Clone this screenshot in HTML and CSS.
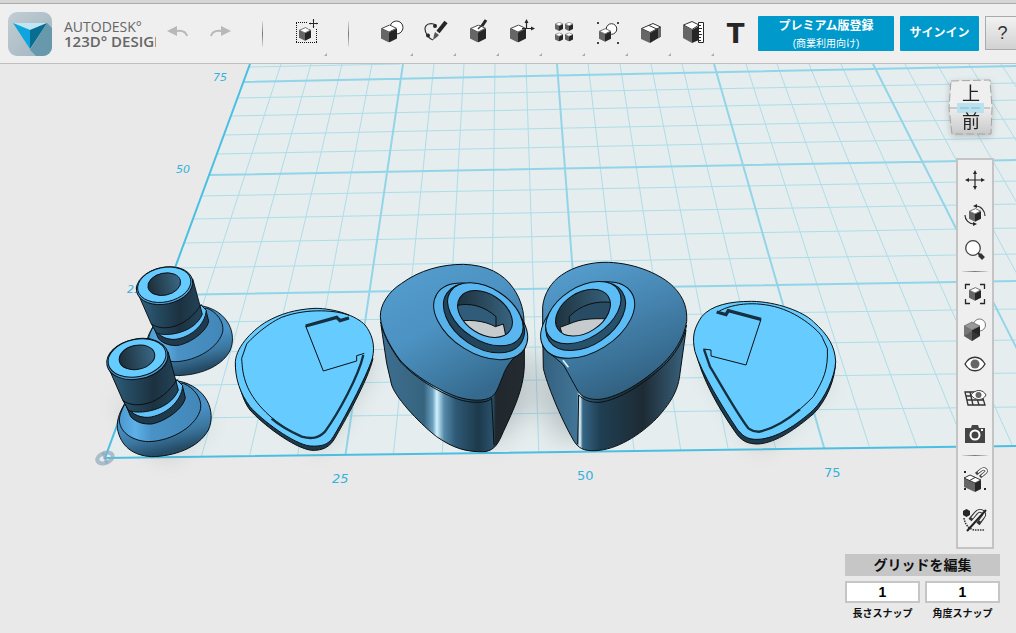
FILE: index.html
```html
<!DOCTYPE html>
<html lang="ja">
  <head>
    <meta charset="UTF-8" />
    <meta name="viewport" content="width=device-width, initial-scale=1.0" />
    <title>Autodesk 123D Design</title>
    <link rel="stylesheet" href="styles.css" />
  </head>
  <body>
    <!-- shared shapes -->
    <svg class="defs" width="0" height="0" aria-hidden="true">
      <symbol id="cube" viewBox="0 0 16 18">
        <path d="M0 4 8 8V18L0 14Z" fill="#666" />
        <path d="M8 8 16 4V14L8 18Z" fill="#262626" />
        <path d="M.6 4 8.6.5 15.4 3.8 8 7.6Z" fill="#fff" stroke="#333" stroke-width=".9" />
      </symbol>
      <symbol id="move" viewBox="0 0 24 24">
        <path d="M12 4V20M4 12H20" stroke="#262626" stroke-width="1.2" />
        <path d="M12 2 14 6h-4zM12 22 14 18h-4zM2 12 6 10v4zM22 12 18 10v4z" fill="#262626" />
      </symbol>
    </svg>

    <header class="toolbar">
      <a class="brand" href="#">
        <svg class="brand-logo" viewBox="0 0 44 44" aria-hidden="true">
          <defs>
            <linearGradient id="logoBg" x2="1" y2="1">
              <stop offset="0" stop-color="#c3cdd4" />
              <stop offset="1" stop-color="#9fb4bf" />
            </linearGradient>
            <clipPath id="logoClip"><rect width="44" height="44" rx="9" /></clipPath>
          </defs>
          <g clip-path="url(#logoClip)">
            <rect width="44" height="44" fill="url(#logoBg)" />
            <path d="M39 11 22 38 28 44H44V16Z" fill="#6898ab" />
            <path d="M5 11H39L22 18Z" fill="#bfe6f5" />
            <path d="M5 11 22 18V37Z" fill="#0ea5dc" />
            <path d="M39 11 22 18V37Z" fill="#076d91" />
          </g>
        </svg>
        <span class="brand-text">
          <span>AUTODESK°</span>
          <strong>123D° DESIGN</strong>
        </span>
      </a>
      <div class="history">
        <button type="button" aria-label="Undo">
          <svg width="22" height="14" viewBox="0 0 22 14"><path d="M0 6 10 1V11Z" fill="#b8b8b8" /><path d="M9 6C15 5 19 7 20 11" fill="none" stroke="#b8b8b8" stroke-width="2" /></svg>
        </button>
        <button type="button" aria-label="Redo">
          <svg width="22" height="14" viewBox="0 0 22 14"><path d="M22 6 12 1V11Z" fill="#b8b8b8" /><path d="M13 6C7 5 3 7 2 11" fill="none" stroke="#b8b8b8" stroke-width="2" /></svg>
        </button>
      </div>
      <span class="divider"></span>
      <div class="tools">
        <button type="button" class="has-menu" aria-label="Transform">
          <svg viewBox="0 0 33 33">
            <path d="M7 5.5H28M7 25.5H28M7.500 6V26M27.500 6V26" fill="none" stroke="#111" stroke-dasharray="1 1" />
            <use href="#cube" x="10" y="10" width="12" height="14" />
            <path d="M19 1h11v11H19z" fill="#efefef" />
            <use href="#move" x="19" y="1" width="11" height="11" />
            <path d="M24.500 2V11M20 6.500H29" stroke="#262626" />
          </svg>
        </button>
      </div>
      <span class="divider"></span>
      <nav class="tools" aria-label="Tools">
        <button type="button" class="has-menu" aria-label="Primitives">
          <svg viewBox="0 0 33 33">
            <circle cx="21.5" cy="10.5" r="6.5" fill="#fff" stroke="#333" />
            <use href="#cube" x="6" y="7.5" width="16" height="18" />
          </svg>
        </button>
        <button type="button" class="has-menu" aria-label="Sketch">
          <svg viewBox="0 0 33 33">
            <path d="M18 8C13 5 7 7 7 12C7 16 11 22 15 23" fill="none" stroke="#333" stroke-width="1.2" />
            <circle cx="17" cy="9" r="2" fill="#262626" /><circle cx="10" cy="18.5" r="2" fill="#262626" />
            <path d="M28 5 20 15" stroke="#262626" stroke-width="4" />
            <path d="M17 15 21 18 19 20 15 23 16 18Z" fill="#555" />
          </svg>
        </button>
        <button type="button" class="has-menu" aria-label="Construct">
          <svg viewBox="0 0 33 33">
            <use href="#cube" x="9" y="7.5" width="16" height="18" />
            <path d="M25 3 21 9" stroke="#262626" stroke-width="3" /><path d="M21 8 17 12" stroke="#333" stroke-width="1.5" />
          </svg>
        </button>
        <button type="button" class="has-menu" aria-label="Modify">
          <svg viewBox="0 0 33 33">
            <use href="#cube" x="6" y="7.5" width="16" height="18" />
            <path d="M22.5 12V5M18 11.5H28" stroke="#262626" stroke-width="1.2" />
            <path d="M22.5 2 24.5 6H20.5ZM31 11.5 27 9.5V13.5Z" fill="#262626" />
          </svg>
        </button>
        <button type="button" class="has-menu" aria-label="Pattern">
          <svg viewBox="0 0 33 33">
            <use href="#cube" x="8" y="5" width="8" height="9" /><use href="#cube" x="18" y="5" width="8" height="9" />
            <use href="#cube" x="8" y="15.5" width="8" height="9" /><use href="#cube" x="18" y="15.5" width="8" height="9" />
          </svg>
        </button>
        <button type="button" class="has-menu" aria-label="Grouping">
          <svg viewBox="0 0 33 33">
            <circle cx="21.5" cy="12" r="5.3" fill="#fff" stroke="#333" />
            <use href="#cube" x="9" y="11" width="12" height="14" />
            <path d="M7 5h2v2H7zM27 5h2v2H27zM7 25h2v2H7zM27 25h2v2H27z" fill="#444" />
          </svg>
        </button>
        <button type="button" class="has-menu" aria-label="Combine">
          <svg viewBox="0 0 33 33">
            <path d="M8 11.5 17 16V26L8 22Z" fill="#666" /><path d="M17 16 28 10V19.5L17 26Z" fill="#262626" />
            <path d="M25 12 28 10V19.5L25 21.5Z" fill="#666" />
            <path d="M8.5 11.5 20 6.5 27.5 10 17 15.5Z" fill="#fff" stroke="#333" />
            <path d="M16 8.500 24 12" stroke="#333" />
          </svg>
        </button>
        <button type="button" class="has-menu" aria-label="Measure">
          <svg viewBox="0 0 33 33">
            <path d="M7 8 16 13V26L7 21Z" fill="#666" /><path d="M16 13 23 9V23L16 26Z" fill="#262626" />
            <path d="M7.5 8 16 4.500 23 8 16 12.500Z" fill="#fff" stroke="#333" />
            <path d="M22.5 5.5H27.5V25.5H22.5Z" fill="#fff" stroke="#262626" />
            <path d="M23 8.500h2M23 11.500h3M23 14.500h2M23 17.500h3M23 20.500h2M23 23.500h2" stroke="#262626" />
          </svg>
        </button>
        <button type="button" class="text-tool" aria-label="Text">T</button>
      </nav>
      <div class="account">
        <button type="button" class="btn-blue premium">プレミアム版登録<small>(商業利用向け)</small></button>
        <button type="button" class="btn-blue signin">サインイン</button>
        <button type="button" class="help" aria-label="Help">?</button>
      </div>
    </header>

    <main class="workspace">
      <svg class="scene" viewBox="0 64 1016 569" preserveAspectRatio="xMinYMin slice" role="img" aria-label="3D view">
        <defs>
          <clipPath id="planeClip"><path d="M105 458 250 64H1016V446Z" /></clipPath>
          <filter id="soft" x="-30%" y="-30%" width="160%" height="160%"><feGaussianBlur stdDeviation="12" /></filter>
          <linearGradient id="tube">
            <stop offset="0" stop-color="#34637f" /><stop offset=".3" stop-color="#254b62" />
            <stop offset=".65" stop-color="#1c3140" /><stop offset="1" stop-color="#24445a" />
          </linearGradient>
          <linearGradient id="bore">
            <stop offset="0" stop-color="#1c2d38" /><stop offset="1" stop-color="#3a6885" />
          </linearGradient>
          <linearGradient id="flange" x2=".3" y2="1">
            <stop offset="0" stop-color="#3f7fae" /><stop offset=".55" stop-color="#4a93c8" />
            <stop offset=".8" stop-color="#3b77a0" /><stop offset="1" stop-color="#254c67" />
          </linearGradient>
          <linearGradient id="cone">
            <stop offset="0" stop-color="#4d98cf" /><stop offset=".2" stop-color="#5cb0e8" />
            <stop offset=".4" stop-color="#4a92c6" /><stop offset="1" stop-color="#4287b8" />
          </linearGradient>
          <linearGradient id="topL" x2=".6" y2="1">
            <stop offset="0" stop-color="#559fd0" /><stop offset=".5" stop-color="#4c92c2" />
            <stop offset=".8" stop-color="#3f7ba3" /><stop offset="1" stop-color="#356a8e" />
          </linearGradient>
          <linearGradient id="topR" x1=".3" x2=".7" y2="1">
            <stop offset="0" stop-color="#549dce" /><stop offset=".4" stop-color="#4684b0" />
            <stop offset=".75" stop-color="#386d91" /><stop offset="1" stop-color="#2f5a77" />
          </linearGradient>
          <linearGradient id="sideL">
            <stop offset="0" stop-color="#3e6f90" /><stop offset=".3" stop-color="#36647f" />
            <stop offset=".36" stop-color="#6aa0bf" /><stop offset=".39" stop-color="#d3f2ff" />
            <stop offset=".44" stop-color="#558aa8" /><stop offset=".52" stop-color="#2e5a76" />
            <stop offset=".68" stop-color="#1d394b" /><stop offset=".78" stop-color="#2a526c" />
            <stop offset=".8" stop-color="#20282e" /><stop offset="1" stop-color="#242c31" />
          </linearGradient>
          <linearGradient id="sideR">
            <stop offset="0" stop-color="#35607f" /><stop offset=".24" stop-color="#417596" />
            <stop offset=".26" stop-color="#e5f7ff" /><stop offset=".28" stop-color="#356585" />
            <stop offset=".4" stop-color="#203f53" /><stop offset=".7" stop-color="#1d2b34" />
            <stop offset="1" stop-color="#3a6480" />
          </linearGradient>
          <clipPath id="holeL"><ellipse cx="345" cy="192" rx="90" ry="60" transform="rotate(33 345 192)" /></clipPath>
          <clipPath id="holeR"><ellipse cx="159" cy="188" rx="90" ry="60" transform="rotate(-33 159 188)" /></clipPath>

          <g id="peg">
            <path d="M108 440C92 465 80 490 82 520C92 575 130 602 185 605C250 604 325 580 355 525C380 470 350 395 265 378Z" fill="url(#flange)" />
            <path d="M108 440C95 465 88 480 88 498C92 535 130 558 175 560C250 558 322 510 332 460C336 430 312 398 280 385Z" fill="url(#cone)" />
            <path d="M104 442 122 485C140 503 160 508 185 507C230 498 280 460 286 428L277 392 262 376Z" fill="#1f3a4c" />
            <path d="M104 442C118 475 145 488 175 487C225 482 275 440 278 392L262 376Z" fill="#62c3fa" />
            <path d="M52 330 98 435 116 466C145 480 240 468 265 405L234 290Z" fill="url(#tube)" />
            <path d="M98 436C135 464 215 450 262 372" fill="none" />
            <ellipse cx="142" cy="312" rx="93" ry="60" transform="rotate(-12 142 312)" fill="#4a9fd6" />
            <ellipse cx="141" cy="309" rx="88" ry="56" transform="rotate(-12 141 309)" fill="#66ccff" />
            <ellipse cx="141" cy="307" rx="54" ry="36" transform="rotate(-12 141 307)" fill="url(#bore)" />
          </g>
        </defs>

        <!-- work plane -->
        <path d="M105 458 250 64H1016V446Z" fill="#e5edee" />
        <g clip-path="url(#planeClip)" fill="none">
          <path class="grid-minor" d="M281 64 153 458M311 64 201 458M342 64 249 458M372 64 297 458M434 64 393 458M464 64 442 458M495 64 490 458M526 64 539 458M588 64 635 458M620 64 682 458M651 64 730 458M682 64 778 458M746 64 873 458M777 64 921 458M809 64 970 458M841 64 1018 458M905 64 1115 458M937 64 1164 458M969 64 1212 458M1001 64 1261 458" />
          <path class="grid-minor" d="M119 419 1016 407M131 386 1016 373M144 353 1016 340M155 323 1016 309M175 268 1016 254M184 243 1016 228M193 219 1016 204M201 196 1016 181M217 154 1016 138M224 135 1016 119M231 116 1016 100M237 98 1016 83M249 67 400 64" />
          <path class="grid-major" d="M403 64 345 458M557 64 587 458M714 64 827 458M873 64 1072 458M165 295 1016 281M209 175 1016 160M243 82 1016 66" />
        </g>
        <path class="grid-edge" d="M250 64 105 458 1016 446" />

        <g class="axis">
          <text x="213" y="81" class="axis-far">75</text>
          <text x="176" y="173" class="axis-far">50</text>
          <text x="127" y="293" class="axis-far">25</text>
          <text x="332" y="483" class="axis-lean">25</text>
          <text x="577" y="480">50</text>
          <text x="824" y="477">75</text>
        </g>

        <!-- origin -->
        <g transform="rotate(-20 105 458)">
          <ellipse cx="105" cy="458" rx="8" ry="5" fill="none" stroke="#8fa9bd" stroke-width="4" opacity=".7" />
          <path d="M105 452V464" stroke="#8fa9bd" stroke-width="3" opacity=".7" />
        </g>

        <!-- contact shadows -->
        <g filter="url(#soft)" fill="#58636a" opacity=".3">
          <path d="M440 400 530 350 530 410 490 445ZM545 350 600 430 560 440 538 400Z" />
          <path d="M270 400 320 450 375 360 345 350ZM705 360 760 450 830 380 760 360ZM115 400 165 460 210 420Z" />
        </g>

        <svg class="part" x="90" y="255" width="160" height="220" viewBox="0 0 480 660">
          <use href="#peg" transform="translate(93 -195) scale(.92)" />
          <use href="#peg" />
        </svg>

        <svg class="part" x="225" y="290" width="170" height="200" viewBox="0 0 510 600">
          <path d="M31 225C45 310 60 340 75 360C110 400 205 474 260 481C295 482 315 470 330 444C355 400 430 270 444 205Z" fill="#1f3a4c" />
          <path d="M270 55C330 55 395 78 420 105C440 130 452 165 442 205C425 260 350 400 325 440C310 465 290 470 255 468C205 462 110 390 75 350C45 310 30 265 31 215C35 165 90 115 125 95C165 72 210 58 270 55Z" fill="#66ccff" />
          <path d="M372 76C340 62 250 52 170 82C120 105 75 150 65 162L50 205C52 230 52 255 68 292C90 340 140 395 220 435" fill="none" />
          <path class="groove" d="M140 386C165 408 195 424 230 440C260 448 280 445 300 425C340 370 400 260 415 195" />
          <path class="groove notch" d="M242 108 335 82 345 92 372 84" />
          <path d="M242 108 295 243 395 213V197L418 190" fill="none" />
        </svg>

        <svg class="part" x="370" y="250" width="170" height="220" viewBox="0 0 510 660">
          <path d="M33 225 50 340 65 405C80 450 160 530 200 560C250 595 290 607 345 605C375 600 385 580 400 545C430 480 460 420 463 350V220Z" fill="url(#sideL)" />
          <path d="M365 445 372 585" fill="none" />
          <path d="M31 215C40 255 65 300 92 336C130 378 200 425 262 447C300 460 350 462 366 444" fill="none" />
          <path d="M280 43C350 45 400 70 430 115C455 150 462 190 462 215L465 295C430 320 410 345 398 380C385 410 380 430 365 440C345 455 300 453 260 440C190 415 120 365 90 330C60 290 33 240 31 200C30 165 55 125 95 100C150 60 215 43 280 43Z" fill="url(#topL)" />
          <ellipse cx="332" cy="214" rx="155" ry="95" transform="rotate(32 332 214)" fill="#58b2ea" />
          <ellipse cx="342" cy="204" rx="134" ry="88" transform="rotate(34 342 204)" fill="#22455b" />
          <ellipse cx="346" cy="193" rx="125" ry="78" transform="rotate(33 346 193)" fill="#5ab6f0" />
          <g clip-path="url(#holeL)">
            <path d="M250 110H440V270H250Z" fill="url(#bore)" />
            <path d="M255 168C300 155 345 170 378 200V232L255 220Z" fill="#315c79" />
            <path d="M250 218C290 205 345 212 376 230L400 222 410 270H250Z" fill="#c6cccd" />
          </g>
          <ellipse cx="345" cy="192" rx="90" ry="60" transform="rotate(33 345 192)" fill="none" />
        </svg>

        <svg class="part" x="530" y="250" width="170" height="240" viewBox="0 0 510 720">
          <path d="M38 240 40 355C50 400 90 500 130 570C145 595 160 603 195 602C260 600 330 555 380 505C430 450 445 415 450 370L468 240Z" fill="url(#sideR)" />
          <path d="M146 435 143 582" fill="none" />
          <path d="M470 225C460 280 430 318 400 348C340 403 270 448 210 457C175 458 160 448 146 435" fill="none" />
          <path d="M235 37C320 40 395 75 430 110C465 145 472 180 470 215C460 270 430 310 400 340C340 395 270 440 210 448C175 450 155 440 145 425C125 390 110 360 100 345C80 325 50 305 38 290V170C42 130 65 95 95 75C130 50 185 35 235 37Z" fill="url(#topR)" />
          <path class="glint" d="M100 332 114 350" />
          <ellipse cx="173" cy="210" rx="155" ry="95" transform="rotate(-32 173 210)" fill="#5cbcf6" />
          <ellipse cx="167" cy="199" rx="132" ry="86" transform="rotate(-34 167 199)" fill="#28516b" />
          <ellipse cx="160" cy="188" rx="125" ry="76" transform="rotate(-33 160 188)" fill="#5cbcf6" />
          <g clip-path="url(#holeR)">
            <path d="M60 100H260V270H60Z" fill="url(#bore)" />
            <path d="M118 225V200C150 165 200 150 250 158V215Z" fill="#284c64" />
            <path d="M90 232 130 217C160 205 200 205 250 207V270H103Z" fill="#c6cccd" />
          </g>
          <ellipse cx="159" cy="188" rx="90" ry="60" transform="rotate(-33 159 188)" fill="none" />
        </svg>

        <svg class="part" x="680" y="280" width="190" height="210" viewBox="0 0 570 630">
          <path d="M43 200C65 300 120 390 165 455C185 485 205 492 235 492C290 488 350 445 402 400C440 360 465 300 467 245Z" fill="#1f3a4c" />
          <path d="M215 64C290 65 370 95 400 125C445 165 465 200 467 245C465 290 435 355 400 390C350 435 290 475 235 478C200 480 185 465 170 445C130 385 65 280 45 215C35 170 42 145 65 110C95 75 150 64 215 64Z" fill="#66ccff" />
          <path d="M115 95C160 68 240 62 310 88C370 110 425 160 428 175L442 205C445 270 430 300 400 350C350 400 300 440 235 455" fill="none" />
          <path class="groove" d="M360 388C310 430 270 448 240 455C225 456 215 452 205 445C170 400 100 275 90 260L72 208" />
          <path class="groove notch" d="M110 96 138 104 145 92 243 118" />
          <path d="M243 118 198 255 93 228V210L70 207" fill="none" />
        </svg>
      </svg>

      <aside class="view-tools">
        <button type="button" class="viewcube" aria-label="View cube">
          <svg viewBox="0 0 46 60" width="46" height="60">
            <defs>
              <linearGradient id="cubeFront" x2="0" y2="1"><stop offset="0" stop-color="#eee" /><stop offset="1" stop-color="#c9c9c9" /></linearGradient>
            </defs>
            <path d="M3 3 42 2 44 30H1Z" fill="#efefef" />
            <path d="M1 30H44L43 56H4Z" fill="url(#cubeFront)" />
            <path d="M3 3 42 2 44 30 43 56H4L1 30ZM1 30H44" fill="none" stroke="#a5a5a5" stroke-dasharray="8 3" />
            <path d="M9 25H36V35H9Z" fill="#b9e2f1" />
            <path d="M12 30H33" stroke="#8ab5c4" stroke-dasharray="9 2" />
            <text x="23" y="22">上</text>
            <text x="23" y="50">前</text>
          </svg>
        </button>

        <nav class="nav-bar" aria-label="View">
          <button type="button" aria-label="Pan"><svg viewBox="0 0 24 24"><use href="#move" width="24" height="24" /></svg></button>
          <button type="button" aria-label="Orbit">
            <svg viewBox="0 0 24 24">
              <use href="#cube" x="6" y="5" width="12" height="14" />
              <path d="M13 3C18 3 22 8 22 13M11 21C6 21 2 17 2 12" fill="none" stroke="#333" stroke-width="1.2" />
              <path d="M14 1V5L10 3ZM10 19V23L14 21Z" fill="#262626" />
            </svg>
          </button>
          <button type="button" aria-label="Zoom">
            <svg viewBox="0 0 24 24"><circle cx="10" cy="10" r="7.3" fill="#fff" stroke="#444" stroke-width="1.3" /><path d="M15 15 18 18" stroke="#333" stroke-width="2" /><path d="M16.5 16.5 20.5 20.5" stroke="#333" stroke-width="4" /></svg>
          </button>
          <hr />
          <button type="button" aria-label="Fit">
            <svg viewBox="0 0 24 24"><use href="#cube" x="6" y="5" width="12" height="14" /><path d="M7 2.5H2.5V7M17 2.5H21.5V7M7 21.5H2.5V17M17 21.5H21.5V17" fill="none" stroke="#262626" stroke-width="1.3" /></svg>
          </button>
          <button type="button" aria-label="Materials">
            <svg viewBox="0 0 24 24">
              <circle cx="16.5" cy="8" r="6" fill="#fff" stroke="#777" />
              <path d="M1 9 9 13V24L1 19Z" fill="#777" /><path d="M9 13 17 9V19L9 24Z" fill="#262626" />
              <path d="M1 9 9 5 17 9 9 13Z" fill="#999" stroke="#555" stroke-width=".6" /><path d="M1 19 9 14 17 19 9 24Z" fill="#444" opacity=".5" />
            </svg>
          </button>
          <button type="button" aria-label="Visibility">
            <svg viewBox="0 0 24 24"><path d="M2 12C7 3 17 3 22 12C17 21 7 21 2 12Z" fill="#fff" stroke="#333" stroke-width="1.3" /><circle cx="12" cy="12" r="4.5" fill="#666" /></svg>
          </button>
          <button type="button" aria-label="Grid visibility">
            <svg viewBox="0 0 24 24">
              <path d="M2 5H18L22 18H5ZM3 9H20M4 13H21M7 5 10 18M12 5 16 18" fill="none" stroke="#333" stroke-width="1.3" />
              <path d="M8 8C12 2 20 2 23 8C20 14 12 14 8 8Z" fill="#fff" stroke="#444" /><circle cx="15.5" cy="8" r="3" fill="#666" />
            </svg>
          </button>
          <button type="button" aria-label="Screenshot">
            <svg viewBox="0 0 24 24"><path d="M2 6H8L9 3H15L16 6H22V21H2Z" fill="#444" /><circle cx="12" cy="13" r="4.5" fill="none" stroke="#fff" stroke-width="2" /><path d="M18 7h2v2h-2z" fill="#fff" /></svg>
          </button>
          <hr />
          <button type="button" class="tall" aria-label="Snap">
            <svg viewBox="0 0 24 24">
              <path d="M1 10 12 15V24L1 19Z" fill="#666" /><path d="M12 15 18 12V21L12 24Z" fill="#262626" />
              <path d="M1 10 7 7 18 12 12 15Z" fill="#fff" stroke="#333" /><path d="M6.500 12.500 12 9.500" stroke="#333" />
              <path d="M13 6 18 2C22-1 25 3 22 5L17 9" fill="none" stroke="#444" stroke-width="3.2" /><path d="M15 4.500 18 2C22-1 25 3 22 5L18.500 8" fill="none" stroke="#fff" stroke-width="1.6" />
              <path d="M1 3h2v2H1zM1 20h2v2H1zM21 20h2v2H21z" fill="#262626" />
            </svg>
          </button>
          <button type="button" class="tall" aria-label="Snapping off">
            <svg viewBox="0 0 24 24">
              <path d="M0 3 3.5 1 7 3V7L3.5 9 0 7Z" fill="#262626" />
              <path d="M1 10C2 18 8 22 12 22H22" fill="none" stroke="#333" stroke-width="1.5" stroke-dasharray="1.5 1" />
              <path d="M7 12 13 5C17 0 24 5 20 9L15 16" fill="none" stroke="#333" stroke-width="4" /><path d="M9 10 13 5C17 0 24 5 20 9L17 13" fill="none" stroke="#efefef" stroke-width="2" />
              <path d="M4 23 23 2" stroke="#222" stroke-width="2" />
            </svg>
          </button>
        </nav>
      </aside>

      <form class="grid-panel">
        <button type="button" class="grid-title">グリッドを編集</button>
        <div class="snap">
          <input id="lengthSnap" type="text" value="1" />
          <label for="lengthSnap">長さスナップ</label>
        </div>
        <div class="snap">
          <input id="angleSnap" type="text" value="1" />
          <label for="angleSnap">角度スナップ</label>
        </div>
      </form>
    </main>
  </body>
</html>
```

FILE: styles.css
```css
* {
  box-sizing: border-box;
}
body {
  margin: 0;
  height: 100vh;
  display: flex;
  flex-direction: column;
  overflow: hidden;
  background: #e9e9e9;
  color: #111;
  font-family: "Liberation Sans", "Noto Sans CJK JP", sans-serif;
}
button {
  padding: 0;
  border: none;
  background: none;
  font-family: inherit;
  color: inherit;
  cursor: pointer;
}
.defs {
  position: absolute;
}

/* top toolbar */
.toolbar {
  flex: none;
  display: flex;
  align-items: center;
  height: 64px;
  padding: 4px 0 0 8px;
  background: #efefef;
  border-bottom: 1px solid #bfbfbf;
  box-shadow: inset 0 3px #d6d6d6, inset 0 4px #aaa;
}
.brand {
  flex: none;
  display: flex;
  gap: 12px;
  width: 148px;
  overflow: hidden;
  color: #666;
  text-decoration: none;
}
.brand-logo {
  flex: none;
  width: 44px;
  height: 44px;
}
.brand-text {
  display: flex;
  flex-direction: column;
  padding-top: 7px;
  font-family: "Open Sans", sans-serif;
  font-size: 14px;
  line-height: 15px;
  white-space: nowrap;
}
.brand-text strong {
  font-size: 15px;
  font-weight: 600;
}
.history {
  flex: none;
  display: flex;
  gap: 20px;
  margin: 0 31px 0 11px;
}
.history button {
  height: 24px;
}
.divider {
  flex: none;
  width: 1px;
  height: 26px;
  background: linear-gradient(#ddd, #777, #ddd);
}
.tools {
  flex: none;
  display: flex;
  margin: 0 21px;
}
.tools button {
  position: relative;
  width: 43px;
  height: 44px;
}
.tools svg {
  display: block;
  width: 33px;
  height: 33px;
  margin: 0 5px;
}
.has-menu::after {
  content: "";
  position: absolute;
  right: 0;
  bottom: 0;
  border-left: 3px solid transparent;
  border-bottom: 3px solid #aaa;
}
.tools .text-tool {
  font: bold 26px "DejaVu Sans", sans-serif;
  color: #262626;
}
.divider + nav.tools {
  margin-right: 0;
}
.account {
  flex: none;
  display: flex;
  gap: 6px;
  margin-left: 1px;
}
.btn-blue {
  height: 35px;
  border-radius: 1px;
  background: #0099cc;
  color: #fff;
  font-size: 12px;
  font-weight: bold;
  line-height: 17px;
}
.btn-blue small {
  display: block;
  font-size: 10px;
  font-weight: normal;
}
.premium {
  width: 136px;
  padding-top: 2px;
}
.signin {
  width: 79px;
}
.help {
  width: 35px;
  height: 34px;
  border: 1px solid #aaa;
  background: linear-gradient(#f2f2f2, #d2d2d2);
  color: #333;
  font-size: 18px;
}

/* modelling area */
.workspace {
  flex: 1;
  position: relative;
  min-height: 0;
}
.scene {
  display: block;
  width: 100%;
  height: 100%;
}
.grid-minor {
  stroke: #addde9;
}
.grid-major {
  stroke: #93d5e8;
  stroke-width: 2;
}
.grid-edge {
  fill: none;
  stroke: #4bbfe2;
  stroke-width: 2;
}
.axis {
  fill: #35b2dc;
  font: 13px "DejaVu Sans", sans-serif;
}
.axis-far {
  font-size: 11px;
  font-style: oblique;
}
.axis-lean {
  font-style: oblique;
}
.part {
  stroke: #0a0f12;
  stroke-width: 3;
}
.part .groove {
  fill: none;
  stroke: #16303f;
  stroke-width: 7;
}
.part .notch {
  stroke-width: 10;
}
.part .glint {
  stroke: #d9f1fc;
  stroke-width: 5;
  stroke-linecap: round;
}

/* view cube and navigation */
.view-tools {
  position: absolute;
  top: 14px;
  right: 22px;
  display: flex;
  flex-direction: column;
  align-items: flex-end;
  gap: 20px;
}
.viewcube {
  height: 60px;
}
.viewcube svg {
  display: block;
  filter: drop-shadow(0 2px 3px rgba(0, 0, 0, 0.2));
}
.viewcube text {
  font: 18px "Noto Sans CJK JP", sans-serif;
  fill: #222;
  text-anchor: middle;
}
.nav-bar {
  display: flex;
  flex-direction: column;
  align-items: center;
  width: 38px;
  padding: 2px 0 7px;
  border: 2px solid #c4c4c4;
  background: #efefef;
}
.nav-bar button {
  height: 35px;
}
.nav-bar .tall {
  height: 40px;
}
.nav-bar svg {
  display: block;
  width: 24px;
  height: 24px;
  overflow: visible;
}
.nav-bar hr {
  width: 26px;
  height: 1px;
  margin: 4px 0;
  border: none;
  background: linear-gradient(90deg, #ddd, #777, #ddd);
}

/* grid settings */
.grid-panel {
  position: absolute;
  right: 16px;
  bottom: 11px;
  display: grid;
  grid-template-columns: 75px 75px;
  gap: 5px;
  font-weight: bold;
}
.grid-title {
  grid-column: 1 / -1;
  height: 22px;
  background: #c6c6c6;
  font-size: 14px;
  font-weight: bold;
  line-height: 22px;
}
.snap {
  display: flex;
  flex-direction: column;
  gap: 3px;
}
.snap input {
  width: 100%;
  height: 22px;
  padding: 0;
  border: 2px solid #c6c6c6;
  background: #fff;
  font: bold 14px "Liberation Sans", sans-serif;
  text-align: center;
}
.snap label {
  font-size: 10px;
  line-height: 16px;
  text-align: center;
}
```
